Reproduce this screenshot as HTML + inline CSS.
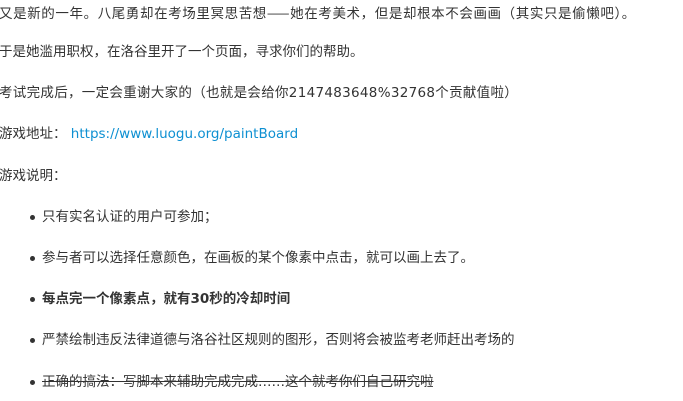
<!DOCTYPE html>
<html><head><meta charset="utf-8"><style>
body{margin:0;width:683px;height:401px;overflow:hidden;background:#fff;font-family:"DejaVu Sans","Noto Sans CJK SC",sans-serif;font-size:13.5px;color:#333;}
.l{position:absolute;left:-1px;white-space:nowrap;line-height:20px;}
.b{left:42px;}
.b::before{content:"";position:absolute;left:-12px;top:8px;width:5px;height:5px;border-radius:50%;background:#333;}
a{color:#0e90d2;text-decoration:none;}
.c{font-family:"Noto Sans CJK SC",sans-serif;}
</style></head><body>
<div class="l" style="top:2px;letter-spacing:0.6px">又是新的一年。八尾勇却在考场里冥思苦想<span class="c">——</span>她在考美术，但是却根本不会画画（其实只是偷懒吧）。</div>
<div class="l" style="top:42px">于是她滥用职权，在洛谷里开了一个页面，寻求你们的帮助。</div>
<div class="l" style="top:83px;letter-spacing:0.3px">考试完成后，一定会重谢大家的（也就是会给你2147483648%32768个贡献值啦）</div>
<div class="l" style="top:124px">游戏地址： <a>https://www.luogu.org/paintBoard</a></div>
<div class="l" style="top:166px">游戏说明：</div>
<div class="l b" style="top:207px">只有实名认证的用户可参加；</div>
<div class="l b" style="top:248px">参与者可以选择任意颜色，在画板的某个像素中点击，就可以画上去了。</div>
<div class="l b" style="top:289px;font-weight:bold">每点完一个像素点，就有30秒的冷却时间</div>
<div class="l b" style="top:330px">严禁绘制违反法律道德与洛谷社区规则的图形，否则将会被监考老师赶出考场的</div>
<div class="l b" style="top:372px"><s>正确的搞法：写脚本来辅助完成完成……这个就考你们自己研究啦</s></div>
</body></html>
